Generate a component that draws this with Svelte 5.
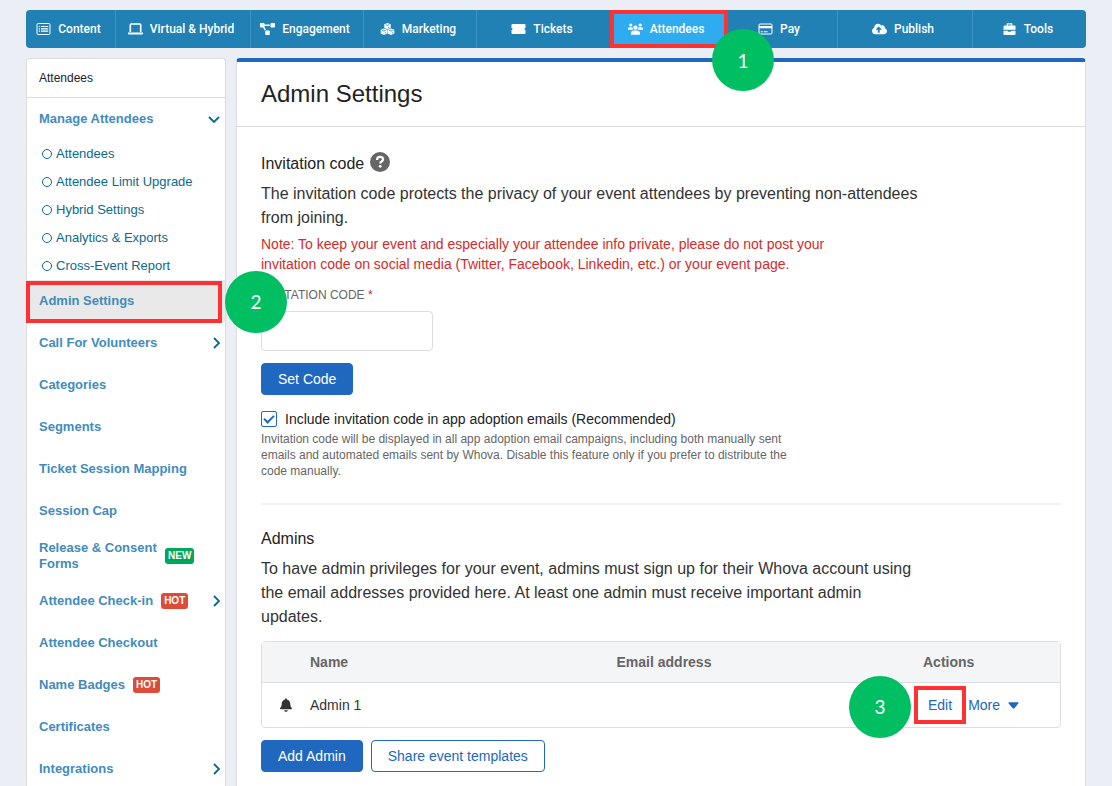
<script lang="ts">
  type NavItem = { label: string; icon: string; active?: boolean };
  type SideItem = {
    label: string;
    tag?: "NEW" | "HOT";
    arrow?: boolean;
    active?: boolean;
  };

  const navItems: NavItem[] = [
    { label: "Content", icon: "list" },
    { label: "Virtual & Hybrid", icon: "laptop" },
    { label: "Engagement", icon: "diagram" },
    { label: "Marketing", icon: "cubes" },
    { label: "Tickets", icon: "ticket" },
    { label: "Attendees", icon: "users", active: true },
    { label: "Pay", icon: "card" },
    { label: "Publish", icon: "cloud" },
    { label: "Tools", icon: "toolbox" },
  ];

  const manageLinks = [
    "Attendees",
    "Attendee Limit Upgrade",
    "Hybrid Settings",
    "Analytics & Exports",
    "Cross-Event Report",
  ];

  const sideItems: SideItem[] = [
    { label: "Admin Settings", active: true },
    { label: "Call For Volunteers", arrow: true },
    { label: "Categories" },
    { label: "Segments" },
    { label: "Ticket Session Mapping" },
    { label: "Session Cap" },
    { label: "Release & Consent Forms", tag: "NEW" },
    { label: "Attendee Check-in", tag: "HOT", arrow: true },
    { label: "Attendee Checkout" },
    { label: "Name Badges", tag: "HOT" },
    { label: "Certificates" },
    { label: "Integrations", arrow: true },
  ];

  let code = $state("");
  let includeCode = $state(true);
</script>

{#snippet navIcon(name: string)}
  {#if name === "list"}
    <svg class="nav-icon" viewBox="0 0 14 12" aria-hidden="true">
      <rect x="0.5" y="0.5" width="13" height="11" rx="1.2" fill="none" stroke="currentColor" />
      <path d="M2.3 3h1.2v1.1H2.3zM4.5 3h7.2v1.1H4.5zM2.3 5.3h1.2v1.1H2.3zM4.5 5.3h7.2v1.1H4.5zM2.3 7.6h1.2v1.1H2.3zM4.5 7.6h7.2v1.1H4.5z" />
    </svg>
  {:else if name === "laptop"}
    <svg class="nav-icon" viewBox="0 0 15 12" aria-hidden="true">
      <path d="M2.3 9V1.900q0-.9.9-.9h8.600q.9 0 .9.9V9" fill="none" stroke="currentColor" stroke-width="1.600" />
      <path d="M0 9.600h15v.6q0 1.300-1.300 1.300H1.300Q0 11.500 0 10.200z" />
    </svg>
  {:else if name === "diagram"}
    <svg class="nav-icon" viewBox="0 0 640 512" aria-hidden="true">
      <path d="M384 320H256c-17.67 0-32 14.33-32 32v128c0 17.67 14.33 32 32 32h128c17.67 0 32-14.33 32-32V352c0-17.67-14.33-32-32-32zM192 32c0-17.67-14.33-32-32-32H32C14.33 0 0 14.33 0 32v128c0 17.67 14.33 32 32 32h95.72l73.16 128.04C211.98 300.98 232.4 288 256 288h.28L192 175.51V128h224V64H192V32zM608 0H480c-17.67 0-32 14.33-32 32v128c0 17.67 14.33 32 32 32h128c17.67 0 32-14.33 32-32V32c0-17.67-14.33-32-32-32z" />
    </svg>
  {:else if name === "cubes"}
    <svg class="nav-icon" viewBox="0 0 14 12" aria-hidden="true">
      <path d="M7 0l3.200 1.300v3.600L7 6.300 3.800 4.900V1.300zM3.500 5.400l3.300 1.400v3.800L3.500 12 .2 10.600V6.800zM10.500 5.400l3.300 1.400v3.800L10.500 12l-3.300-1.400V6.800z" />
      <path d="M5.300 1.700L7 2.400l1.700-.7M1.700 7.300l1.800.8 1.800-.8M8.700 7.300l1.800.8 1.800-.8M8.300 5V3.800M4.800 10.600V9.200M11.800 10.600V9.200" fill="none" stroke="#2180b4" stroke-width="0.8" />
    </svg>
  {:else if name === "ticket"}
    <svg class="nav-icon" viewBox="0 0 14 12" aria-hidden="true">
      <path d="M0 2q0-.9.9-.9h12.200q.9 0 .9.9v2.900a1.100 1.100 0 0 0 0 2.200V10q0 .9-.9.9H.9Q0 10.900 0 10V7.100a1.100 1.100 0 0 0 0-2.200z" />
    </svg>
  {:else if name === "users"}
    <svg class="nav-icon" viewBox="0 0 16 12" aria-hidden="true">
      <circle cx="3" cy="1.7" r="1.7" />
      <circle cx="13" cy="1.7" r="1.7" />
      <circle cx="8" cy="4.6" r="2.3" />
      <path d="M0 6.800V5.600Q0 4 1.600 4h2.200q.7 0 1.200.4-.4 1.500.5 2.400zM16 6.800V5.600Q16 4 14.400 4h-2.200q-.7 0-1.200.4.4 1.500-.5 2.400zM3.200 12v-1.300q0-3 3-3h3.600q3 0 3 3V12z" />
    </svg>
  {:else if name === "card"}
    <svg class="nav-icon" viewBox="0 0 14 12" aria-hidden="true">
      <rect x="0.5" y="1" width="13" height="10" rx="1" fill="none" stroke="currentColor" />
      <path d="M.5 3h13v2.200H.5zM2.300 8.200h2v1h-2zM5.300 8.200H9v1H5.300z" />
    </svg>
  {:else if name === "cloud"}
    <svg class="nav-icon" viewBox="0 0 640 512" aria-hidden="true">
      <path d="M537.6 226.6c4.100-10.700 6.400-22.400 6.400-34.600 0-53-43-96-96-96-19.700 0-38.100 6-53.300 16.200C367 64.200 315.300 32 256 32c-88.400 0-160 71.600-160 160 0 2.700.1 5.400.2 8.100C40.200 219.800 0 273.200 0 336c0 79.500 64.500 144 144 144h368c70.700 0 128-57.300 128-128 0-61.900-44-113.600-102.400-125.400zM393.400 288H328v112c0 8.800-7.200 16-16 16h-48c-8.800 0-16-7.200-16-16V288h-65.400c-14.300 0-21.400-17.200-11.300-27.300l105.400-105.400c6.200-6.200 16.400-6.200 22.600 0l105.400 105.400c10.100 10.100 2.900 27.300-11.300 27.300z" />
    </svg>
  {:else}
    <svg class="nav-icon" viewBox="0 0 14 12" aria-hidden="true">
      <path d="M4.800 2.700V.9h4.400v1.800" fill="none" stroke="currentColor" stroke-width="1.2" />
      <path d="M1 6.700V3.600q0-1 1-1h10q1 0 1 1v3.100zM1 7.700h4.600v1.100h2.800V7.700H13V11q0 1-1 1H2q-1 0-1-1z" />
    </svg>
  {/if}
{/snippet}

{#snippet chevron(down: boolean)}
  <svg class="chevron" class:down viewBox="0 0 12 12" aria-hidden="true">
    <path d="M4 1l5 5-5 5" fill="none" stroke="currentColor" stroke-width="1.8" />
  </svg>
{/snippet}

<div class="page">
  <nav class="topnav" aria-label="Event">
    {#each navItems as item}
      <a class="nav-item" class:active={item.active} href="#{item.icon}">
        {@render navIcon(item.icon)}
        <span>{item.label}</span>
        {#if item.active}
          <span class="frame"></span>
          <span class="step step-nav">1</span>
        {/if}
      </a>
    {/each}
  </nav>

  <div class="columns">
    <aside class="sidebar">
      <div class="side-title">Attendees</div>
      <a class="side-item" href="#manage">
        <span>Manage Attendees</span>
        {@render chevron(true)}
      </a>
      <ul class="sub-list">
        {#each manageLinks as label}
          <li><a href="#sub"><span class="ring"></span>{label}</a></li>
        {/each}
      </ul>
      {#each sideItems as item}
        <a class="side-item" class:active={item.active} href="#side">
          <span class:narrow={item.tag === "NEW"}>{item.label}</span>
          {#if item.tag}
            <span class="tag tag-{item.tag.toLowerCase()}">{item.tag}</span>
          {/if}
          {#if item.arrow}
            {@render chevron(false)}
          {/if}
          {#if item.active}
            <span class="frame"></span>
            <span class="step step-side">2</span>
          {/if}
        </a>
      {/each}
    </aside>

    <main class="panel">
      <header class="panel-header">
        <h1>Admin Settings</h1>
      </header>

      <div class="panel-body">
        <section class="invitation">
          <h2>
            Invitation code
            <svg class="help" viewBox="0 0 20 20" aria-hidden="true">
              <circle cx="10" cy="10" r="10" fill="#666" />
              <path d="M7 8q0-3.200 3.100-3.200 3 0 3 2.500 0 1.300-1.500 2.200-1.300.8-1.300 2" fill="none" stroke="#fff" stroke-width="2.2" />
              <circle cx="10.2" cy="14.3" r="1.4" fill="#fff" />
            </svg>
          </h2>
          <p class="lead">
            The invitation code protects the privacy of your event attendees by preventing
            non-attendees from joining.
          </p>
          <p class="note">
            Note: To keep your event and especially your attendee info private, please do not post
            your invitation code on social media (Twitter, Facebook, Linkedin, etc.) or your event
            page.
          </p>
          <label class="field-label" for="code">INVITATION CODE <span>*</span></label>
          <input class="code-input" id="code" type="text" bind:value={code} />
          <button class="btn btn-primary" type="button">Set Code</button>
          <label class="check">
            <input type="checkbox" bind:checked={includeCode} />
            Include invitation code in app adoption emails (Recommended)
          </label>
          <p class="hint">
            Invitation code will be displayed in all app adoption email campaigns, including both
            manually sent emails and automated emails sent by Whova. Disable this feature only if
            you prefer to distribute the code manually.
          </p>
        </section>

        <section class="admins">
          <h2>Admins</h2>
          <p class="lead">
            To have admin privileges for your event, admins must sign up for their Whova account
            using the email addresses provided here. At least one admin must receive important admin
            updates.
          </p>
          <div class="table-wrap">
            <table>
              <thead>
                <tr>
                  <th class="col-icon"></th>
                  <th>Name</th>
                  <th>Email address</th>
                  <th class="col-actions">Actions</th>
                </tr>
              </thead>
              <tbody>
                <tr>
                  <td class="col-icon">
                    <svg class="bell" viewBox="0 0 448 512" role="img" aria-label="Notified">
                      <path d="M224 512c35.32 0 63.97-28.65 63.97-64H160.03c0 35.35 28.65 64 63.97 64zm215.39-149.71c-19.32-20.76-55.47-51.99-55.47-154.29 0-77.7-54.48-139.9-127.94-155.16V32c0-17.67-14.32-32-31.98-32s-31.98 14.33-31.98 32v20.84C118.56 68.1 64.08 130.3 64.08 208c0 102.3-36.15 133.53-55.47 154.29-6 6.45-8.66 14.16-8.61 21.71.11 16.4 12.98 32 32.1 32h383.8c19.12 0 32-15.6 32.1-32 .05-7.55-2.61-15.27-8.61-21.71z" />
                    </svg>
                  </td>
                  <td>Admin 1</td>
                  <td></td>
                  <td class="col-actions">
                    <div class="actions">
                      <button class="link edit" type="button">
                        Edit
                        <span class="frame"></span>
                        <span class="step step-edit">3</span>
                      </button>
                      <button class="link" type="button">
                        More
                        <svg class="caret" viewBox="0 0 12 7" aria-hidden="true">
                          <path d="M1.200 0h9.600q1 .6.4 1.400L7 6.400q-1 1-2 0L.8 1.400Q.2.6 1.200 0z" />
                        </svg>
                      </button>
                    </div>
                  </td>
                </tr>
              </tbody>
            </table>
          </div>
          <div class="buttons">
            <button class="btn btn-primary" type="button">Add Admin</button>
            <button class="btn btn-outline" type="button">Share event templates</button>
          </div>
        </section>
      </div>
    </main>
  </div>
</div>

<style>
  :global(body) {
    background: #ebeef4;
  }

  .page {
    box-sizing: border-box;
    height: 100vh;
    overflow-y: auto;
    scrollbar-width: none;
    padding: 10px 26px 0;
    display: flex;
    flex-direction: column;
    font-family: "Liberation Sans", Arial, sans-serif;
    color: #222;
  }

  a {
    text-decoration: none;
  }

  h1,
  h2,
  p,
  ul {
    margin: 0;
    padding: 0;
    font-weight: 400;
  }

  /* Top navigation */
  .topnav {
    display: grid;
    grid-template-columns: 90fr 135fr 113fr 113fr 135fr 113fr 113fr 135fr 113fr;
    flex-shrink: 0;
    height: 38px;
    background: #2180b4;
    border-radius: 4px;
  }

  .nav-item {
    position: relative;
    display: flex;
    align-items: center;
    justify-content: center;
    gap: 7px;
    padding-right: 4px;
    color: #fff;
    font-family: Roboto, sans-serif;
    font-size: 12px;
    font-weight: 500;
    white-space: nowrap;
    border-right: 1px solid #3d92c2;
  }

  .nav-item:last-child {
    border-right: 0;
  }

  .nav-item.active {
    background: #2facef;
  }

  .nav-icon {
    width: 15px;
    height: 12px;
    fill: currentColor;
    flex-shrink: 0;
  }

  /* Walkthrough markers */
  .frame {
    position: absolute;
    inset: 0 -4px 0 -2px;
    border: 4px solid #ff3131;
    z-index: 1;
  }

  .step {
    position: absolute;
    display: flex;
    align-items: center;
    justify-content: center;
    width: 62px;
    height: 62px;
    border-radius: 50%;
    background: #00bf63;
    color: #fff;
    font-family: Lato, sans-serif;
    font-size: 19px;
    font-weight: 400;
    z-index: 2;
  }

  .step-nav {
    right: -50px;
    top: 19px;
  }

  .step-side {
    right: -62px;
    top: -9px;
  }

  .step-edit {
    right: 41px;
    top: -17px;
  }

  .columns {
    display: grid;
    grid-template-columns: 200px 1fr;
    gap: 10px;
    margin-top: 10px;
    flex: 1 0 auto;
  }

  /* Sidebar */
  .sidebar {
    background: #fff;
    border: 1px solid #dcdcdc;
    border-bottom: 0;
    border-radius: 4px 4px 0 0;
  }

  .side-title {
    padding: 0 12px;
    border-bottom: 1px solid #dcdcdc;
    font-size: 12px;
    line-height: 38px;
  }

  .side-item {
    position: relative;
    box-sizing: border-box;
    display: flex;
    align-items: center;
    gap: 8px;
    min-height: 42px;
    padding: 8px 3px 8px 12px;
    color: #428bbd;
    font-size: 13px;
    font-weight: 700;
    line-height: 16px;
  }

  .side-item.active {
    background: #e9e9e9;
  }

  .side-item .frame {
    inset: 1px 3px -1px -1px;
  }

  .narrow {
    width: 118px;
  }

  .sub-list {
    list-style: none;
    font-size: 13px;
    line-height: 28px;
  }

  .sub-list a {
    display: flex;
    align-items: center;
    gap: 4px;
    padding-left: 15px;
    color: #0a6a8c;
  }

  .ring {
    box-sizing: border-box;
    width: 10px;
    height: 10px;
    border: 1px solid #0a6a8c;
    border-radius: 50%;
  }

  .chevron {
    width: 12px;
    height: 12px;
    margin-left: auto;
    color: #0a6a8c;
  }

  .chevron.down {
    transform: rotate(90deg);
    margin-right: 2px;
  }

  .tag {
    padding: 0 3px;
    border-radius: 3px;
    color: #fff;
    font-size: 10px;
    line-height: 16px;
  }

  .tag-new {
    background: #00a65a;
  }

  .tag-hot {
    background: #dd4b39;
  }

  /* Main panel */
  .panel {
    background: #fff;
    border: 1px solid #dcdcdc;
    border-top: 4px solid #2068bf;
    border-bottom: 0;
    border-radius: 4px 4px 0 0;
  }

  .panel-header {
    padding: 16px 24px;
    border-bottom: 1px solid #dcdcdc;
  }

  h1 {
    font-size: 24px;
    line-height: 32px;
  }

  .panel-body {
    padding: 25px 24px 0;
  }

  h2 {
    display: flex;
    gap: 6px;
    font-size: 16px;
    line-height: 24px;
    margin-bottom: 6px;
  }

  .help {
    width: 20px;
    height: 20px;
  }

  .lead {
    max-width: 664px;
    color: #333;
    font-size: 16px;
    line-height: 24px;
  }

  .invitation {
    display: flex;
    flex-direction: column;
    align-items: flex-start;
    padding-bottom: 24px;
    border-bottom: 2px solid #f2f2f2;
  }

  .note {
    max-width: 580px;
    margin-top: 4px;
    color: #d42a2a;
    font-size: 14px;
    line-height: 20px;
  }

  .field-label {
    margin: 13px 0 8px;
    color: #666;
    font-size: 12px;
    line-height: 16px;
  }

  .field-label span {
    color: #c22;
  }

  .code-input {
    box-sizing: border-box;
    width: 172px;
    height: 40px;
    margin-bottom: 12px;
    padding: 0 12px;
    border: 1px solid #dcdcdc;
    border-radius: 4px;
    font-size: 14px;
  }

  .btn {
    height: 32px;
    padding: 0 16px;
    border: 1px solid #2068bf;
    border-radius: 4px;
    font-family: inherit;
    font-size: 14px;
  }

  .btn-primary {
    background: #2068bf;
    color: #fff;
  }

  .btn-outline {
    background: #fff;
    color: #2068bf;
  }

  .check {
    display: flex;
    align-items: center;
    gap: 8px;
    margin: 14px 0 2px;
    font-size: 14px;
    line-height: 20px;
  }

  .check input {
    appearance: none;
    display: grid;
    place-items: center;
    width: 16px;
    height: 16px;
    margin: 0;
    border: 1px solid #2068bf;
    border-radius: 2px;
  }

  .check input:checked::before {
    content: "";
    width: 8px;
    height: 4px;
    margin-bottom: 3px;
    border: solid #2068bf;
    border-width: 0 0 2px 2px;
    transform: rotate(-45deg);
  }

  .hint {
    max-width: 540px;
    color: #666;
    font-size: 12px;
    line-height: 16px;
  }

  .admins {
    padding: 22px 0 14px;
  }

  .table-wrap {
    margin: 12px 0;
    border: 1px solid #dcdfe2;
    border-radius: 4px;
  }

  table {
    width: 100%;
    table-layout: fixed;
    border-collapse: collapse;
    font-size: 14px;
  }

  th,
  td {
    padding: 0;
    text-align: left;
  }

  th {
    height: 40px;
    background: #f4f5f7;
    border-bottom: 1px solid #dcdfe2;
    color: #666;
  }

  td {
    height: 44px;
    color: #333;
  }

  .col-icon {
    width: 48px;
  }

  td.col-icon {
    text-align: center;
  }

  .col-actions {
    width: 137px;
  }

  .bell {
    display: block;
    width: 12px;
    height: 14px;
    margin: 0 auto;
    fill: #333;
  }

  .actions {
    display: flex;
    gap: 16px;
    padding-left: 5px;
  }

  .link {
    position: relative;
    display: flex;
    align-items: center;
    gap: 8px;
    padding: 0;
    border: 0;
    background: none;
    color: #2068bf;
    font-family: inherit;
    font-size: 14px;
    line-height: 24px;
  }

  .edit .frame {
    inset: -7px -14px;
  }

  .caret {
    width: 11px;
    height: 7px;
    fill: currentColor;
  }

  .buttons {
    display: flex;
    gap: 8px;
  }
</style>
